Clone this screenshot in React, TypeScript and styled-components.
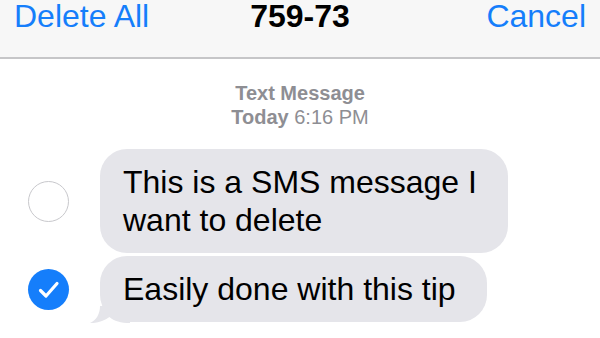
import React from "react";
import styled, { createGlobalStyle } from "styled-components";

const Global = createGlobalStyle`
  html, body { margin: 0; padding: 0; background: #ffffff; }
  body { font-family: "Liberation Sans", Helvetica, Arial, sans-serif; }
`;

const Page = styled.div`
  width: 600px;
  height: 338px;
  overflow: hidden;
  background: #ffffff;
  display: flex;
  flex-direction: column;
`;

const Header = styled.header`
  height: 57px;
  flex: none;
  box-sizing: content-box;
  background: #f7f7f7;
  border-bottom: 2px solid #c6c6c8;
  display: flex;
  align-items: flex-start;
  justify-content: space-between;
  padding: 0 14px;
  position: relative;
`;

const NavButton = styled.span`
  margin-top: 2px;
  font-size: 32px;
  line-height: 28px;
  color: #157efb;
`;

const Title = styled.span`
  position: absolute;
  left: 0;
  right: 0;
  top: 2px;
  text-align: center;
  font-size: 32px;
  line-height: 28px;
  font-weight: bold;
  color: #000;
  pointer-events: none;
`;

const Stamp = styled.div`
  margin-top: 22px;
  text-align: center;
  font-size: 20px;
  line-height: 24px;
  color: #8e8e93;
`;

const StampBold = styled.b`
  font-weight: bold;
`;

const List = styled.div`
  margin-top: 20px;
  display: flex;
  flex-direction: column;
  gap: 3px;
`;

const Row = styled.div`
  display: flex;
  align-items: center;
  padding-left: 28px;
  gap: 31px;
`;

const Circle = styled.div<{ $checked?: boolean }>`
  flex: none;
  width: 41px;
  height: 41px;
  box-sizing: border-box;
  border-radius: 50%;
  border: ${(p) => (p.$checked ? "none" : "1.5px solid #c8c8cc")};
  background: ${(p) => (p.$checked ? "#157efb" : "#ffffff")};
  display: flex;
  align-items: center;
  justify-content: center;
`;

const Bubble = styled.div<{ $wide?: boolean }>`
  position: relative;
  width: ${(p) => (p.$wide ? "408px" : "auto")};
  box-sizing: border-box;
  background: #e5e5ea;
  border-radius: 27px;
  padding: 14px ${(p) => (p.$wide ? "24px" : "31px")} 14px 23px;
  font-size: 32px;
  line-height: 38px;
  color: #000;
`;

const Tail = styled.svg`
  position: absolute;
  left: -10px;
  bottom: -1px;
  width: 40px;
  height: 17px;
`;

const Check = () => (
  <svg width="41" height="41" viewBox="0 0 41 41">
    <path
      d="M12.5 21.5 L18 27 L29 14.5"
      fill="none"
      stroke="#ffffff"
      strokeWidth="3.2"
      strokeLinecap="round"
      strokeLinejoin="round"
    />
  </svg>
);

export default function App() {
  return (
    <Page>
      <Global />
      <Header>
        <NavButton>Delete All</NavButton>
        <Title>759-73</Title>
        <NavButton>Cancel</NavButton>
      </Header>
      <Stamp>
        <div>
          <StampBold>Text Message</StampBold>
        </div>
        <div>
          <StampBold>Today</StampBold> 6:16 PM
        </div>
      </Stamp>
      <List>
        <Row>
          <Circle />
          <Bubble $wide>This is a SMS message I want to delete</Bubble>
        </Row>
        <Row>
          <Circle $checked>
            <Check />
          </Circle>
          <Bubble>
            Easily done with this tip
            <Tail viewBox="0 0 40 17">
              <path
                d="M10 0 C10 8 6.5 14 0 17 C7 17.5 14 15 19.5 11 C24 15 31 17 40 17 L40 0 Z"
                fill="#e5e5ea"
              />
            </Tail>
          </Bubble>
        </Row>
      </List>
    </Page>
  );
}
